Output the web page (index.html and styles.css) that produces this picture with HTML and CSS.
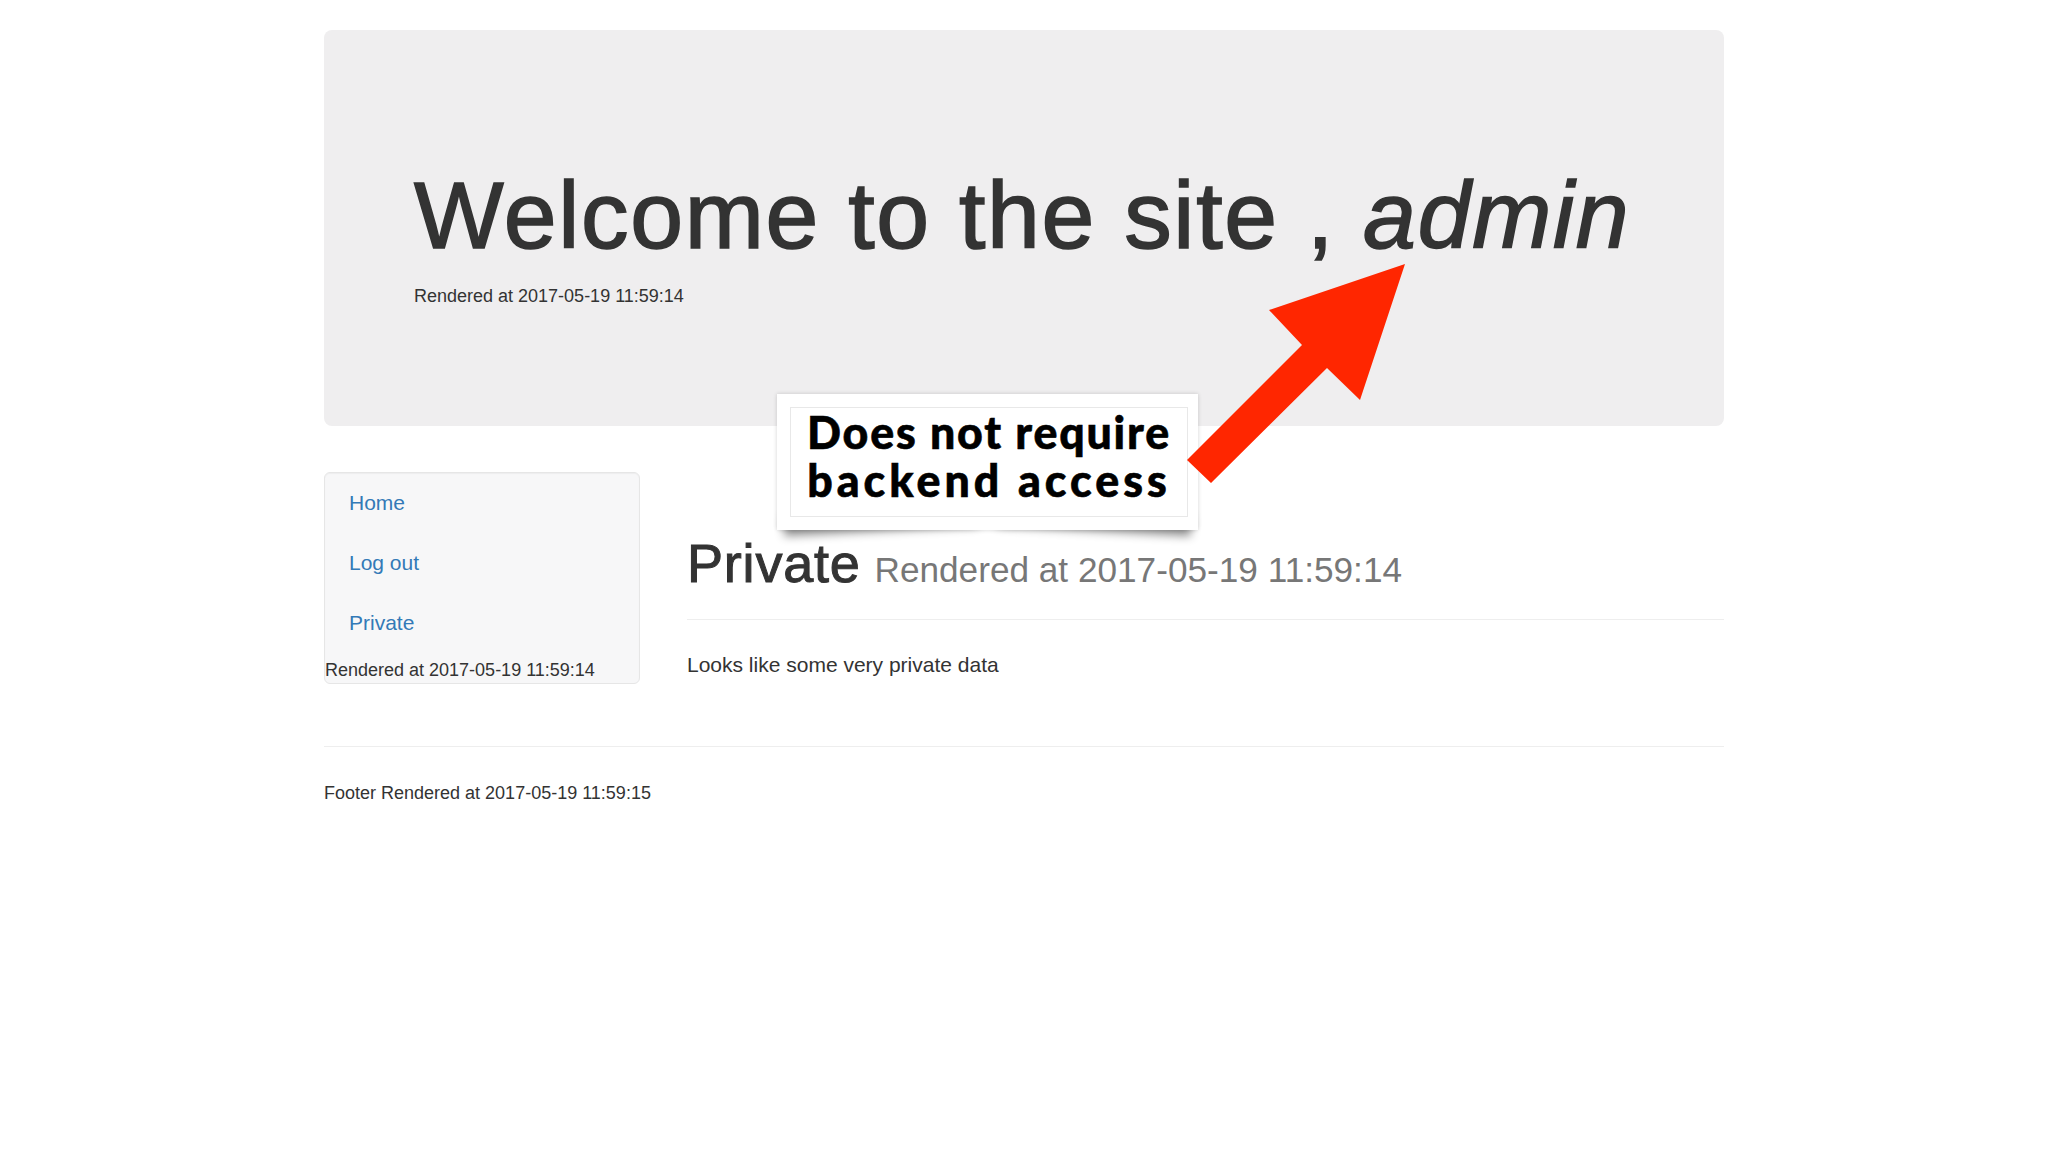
FILE: index.html
```html
<!DOCTYPE html>
<html lang="en">
<head>
<meta charset="utf-8">
<title>Private</title>
<link rel="stylesheet" href="styles.css">
</head>
<body>
<div class="container">
  <div class="jumbotron">
    <h1 class="jumbo-title">Welcome to the site , <em>admin</em></h1>
    <div class="stamp">Rendered at 2017-05-19 11:59:14</div>
  </div>

  <div class="row">
    <aside class="well">
      <ul class="nav">
        <li><a href="#">Home</a></li>
        <li><a href="#">Log out</a></li>
        <li><a href="#">Private</a></li>
      </ul>
      <div class="stamp well-stamp">Rendered at 2017-05-19 11:59:14</div>
    </aside>
    <main class="main">
      <div class="page-header">
        <h1 class="page-title">Private <small>Rendered at 2017-05-19 11:59:14</small></h1>
      </div>
      <p class="lead-text">Looks like some very private data</p>
    </main>
  </div>

  <hr class="footer-rule">
  <footer class="stamp footer">Footer Rendered at 2017-05-19 11:59:15</footer>
</div>

<div class="callout">
  <div class="curl curl-left"></div>
  <div class="curl curl-right"></div>
  <div class="callout-card">
    <div class="callout-inner"><span class="line line-1">Does not require</span><span class="line line-2">backend access</span></div>
  </div>
</div>

<svg class="arrow" width="240" height="240" viewBox="0 0 240 240" aria-hidden="true">
  <polygon points="225,9 89,55 122,90 7,205 31,228 147,113 180,145" fill="#ff2600"/>
</svg>
</body>
</html>
```

FILE: styles.css
```css
html, body {
  margin: 0;
  padding: 0;
  background: #fff;
}

body {
  font-family: "Liberation Sans", Arial, Helvetica, sans-serif;
  color: #333;
  font-size: 21px;
  line-height: 30px;
}

.container {
  width: 1400px;
  margin: 0 auto;
  padding-top: 30px;
}

.jumbotron {
  box-sizing: border-box;
  height: 396px;
  background: #efeeef;
  border-radius: 8px;
  padding: 133px 90px 0 90px;
  margin-bottom: 46px;
}

.jumbo-title {
  margin: 0;
  font-size: 95px;
  line-height: 104.5px;
  font-weight: 400;
  color: #333;
  white-space: nowrap;
  letter-spacing: 1.7px;
  -webkit-text-stroke: 1.6px #333;
}

.jumbo-title em {
  font-style: italic;
}

.stamp {
  font-size: 18px;
  line-height: 26px;
  color: #333;
}

.jumbotron .stamp {
  margin-top: 15.5px;
}

.row {
  display: flex;
  align-items: flex-start;
  gap: 48px;
}

.well {
  box-sizing: border-box;
  width: 316px;
  flex: 0 0 316px;
  background: #f7f7f8;
  border: 1px solid #e6e6e6;
  border-radius: 6px;
  box-shadow: inset 0 1px 1px rgba(0, 0, 0, 0.04);
  padding: 0;
}

.well-stamp {
  margin-top: 4px;
}

.nav {
  list-style: none;
  margin: 0;
  padding: 0 0 0 24px;
}

.nav li a {
  display: block;
  padding: 15px 0;
  line-height: 30px;
  color: #337ab7;
  text-decoration: none;
}

.main {
  flex: 1 1 auto;
  margin-left: -1px;
}

.page-header {
  margin-top: 61.6px;
  padding-bottom: 26px;
  border-bottom: 1px solid #eee;
}

.page-title {
  margin: 0;
  font-size: 54px;
  line-height: 59.4px;
  font-weight: 400;
  color: #333;
  letter-spacing: 0.8px;
  -webkit-text-stroke: 1px #333;
}

.page-title small {
  font-size: 35.2px;
  line-height: 1;
  color: #777;
  letter-spacing: 0;
  margin-left: -2px;
  -webkit-text-stroke: 0;
}

.lead-text {
  margin: 30px 0 0 0;
}

.footer-rule {
  margin: 62px 0 0 0;
  border: 0;
  border-top: 1px solid #eee;
  height: 0;
}

.footer {
  margin-top: 32.8px;
}

/* Annotation overlay */
.callout {
  position: absolute;
  left: 777px;
  top: 394px;
  width: 421px;
  height: 136px;
  z-index: 5;
}

.curl {
  position: absolute;
  bottom: 14px;
  width: 46%;
  height: 20px;
  box-shadow: 0 15px 10px rgba(0, 0, 0, 0.45);
}

.curl-left {
  left: 6px;
  transform: rotate(-3deg);
}

.curl-right {
  right: 6px;
  transform: rotate(3deg);
}

.callout-card {
  position: relative;
  box-sizing: border-box;
  width: 421px;
  height: 136px;
  background: #fff;
  padding: 13px 10px 13px 13px;
  box-shadow: 0 0 4px rgba(0, 0, 0, 0.18);
}

.callout-inner {
  box-sizing: border-box;
  height: 110px;
  border: 1px solid #e8e8e8;
  display: flex;
  flex-direction: column;
  align-items: center;
  font-family: Lato, "DejaVu Sans", sans-serif;
  font-weight: 900;
  font-size: 44.7px;
  line-height: 48px;
  color: #000;
  -webkit-text-stroke: 0.6px #000;
}

.line {
  display: block;
  white-space: nowrap;
}

.line-1 {
  letter-spacing: 1.8px;
}

.line-2 {
  letter-spacing: 4px;
}

.arrow {
  position: absolute;
  left: 1180px;
  top: 255px;
  z-index: 6;
}
```
